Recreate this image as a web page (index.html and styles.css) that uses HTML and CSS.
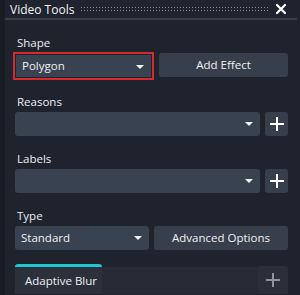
FILE: index.html
```html
<!DOCTYPE html>
<html lang="en">
<head>
    <meta charset="UTF-8">
    <title>Video Tools</title>
    <link rel="stylesheet" href="styles.css">
</head>
<body>
    <div class="panel">
        <div class="header">
            <span class="title">Video Tools</span>
            <span class="grip"></span>
            <svg class="close" width="12" height="12" viewBox="0 0 12 12">
                <path d="M2 2 L10 10 M10 2 L2 10" stroke="#fff" stroke-width="2.2" stroke-linecap="round"/>
            </svg>
        </div>

        <div class="content">
            <div class="label">Shape</div>
            <div class="row">
                <div class="highlight">
                    <div class="select">Polygon<span class="caret"></span></div>
                </div>
                <div class="btn wide">Add Effect</div>
            </div>

            <div class="label">Reasons</div>
            <div class="row">
                <div class="select grow"><span class="caret"></span></div>
                <div class="btn plus">
                    <svg width="14" height="14" viewBox="0 0 14 14"><path d="M7 0 V14 M0 7 H14" stroke="#fff" stroke-width="2"/></svg>
                </div>
            </div>

            <div class="label">Labels</div>
            <div class="row">
                <div class="select grow"><span class="caret"></span></div>
                <div class="btn plus">
                    <svg width="14" height="14" viewBox="0 0 14 14"><path d="M7 0 V14 M0 7 H14" stroke="#fff" stroke-width="2"/></svg>
                </div>
            </div>

            <div class="label">Type</div>
            <div class="row">
                <div class="select half">Standard<span class="caret"></span></div>
                <div class="btn wide">Advanced Options</div>
            </div>

            <div class="tabs">
                <div class="tab active">Adaptive Blur</div>
                <div class="tab-fill"></div>
                <div class="tab-add">
                    <svg width="14" height="14" viewBox="0 0 14 14"><path d="M7 0 V14 M0 7 H14" stroke="#8f95a0" stroke-width="2"/></svg>
                </div>
            </div>
        </div>
    </div>
</body>
</html>
```

FILE: styles.css
```css
* {
    padding: 0;
    margin: 0;
    box-sizing: border-box;
}

body {
    background: #1f232d;
    font-family: "Open Sans", "Liberation Sans", sans-serif;
    font-size: 11.5px;
    color: #e6e8ec;
}

.panel {
    width: 300px;
    height: 295px;
    border-left: 5px solid #181b22;
    overflow: hidden;
}

.header {
    display: flex;
    align-items: center;
    height: 20px;
    padding: 0 10px 0 5px;
    border-bottom: 2px solid #363c48;
    margin-right: 3px;
}

.title {
    font-size: 12px;
    color: #f2f3f5;
}

.grip {
    flex: 1;
    height: 6px;
    margin: 0 6px 0 6px;
    background-image: radial-gradient(circle, #8a909c 0.8px, transparent 1px);
    background-size: 3px 3px;
}

.close {
    display: block;
}

.content {
    padding: 15px 12px 0 10px;
}

.label {
    font-size: 11.5px;
    line-height: 15px;
    color: #eceef1;
    margin-left: 2px;
}

.row {
    display: flex;
    gap: 5px;
    margin: 3px 0 15px;
}

.select {
    position: relative;
    height: 24px;
    line-height: 24px;
    padding-left: 6px;
    background: #394250;
    border-radius: 3px;
    color: #f0f1f4;
}

.caret {
    position: absolute;
    right: 7px;
    top: 10px;
    border-left: 4px solid transparent;
    border-right: 4px solid transparent;
    border-top: 4px solid #f2f2f2;
}

.highlight {
    width: 141px;
    padding: 1px;
    margin: -1px 0 -1px -2px;
    border: 2px solid #d62a2c;
}

.highlight .select {
    border-radius: 0;
    height: 22px;
    line-height: 22px;
}

.grow {
    flex: 1;
}

.half {
    width: 134px;
}

.btn {
    height: 24px;
    line-height: 24px;
    text-align: center;
    background: #373f4c;
    border-radius: 3px;
    color: #eef0f3;
}

.wide {
    flex: 1;
}

.plus {
    width: 23px;
    display: flex;
    align-items: center;
    justify-content: center;
}

.tabs {
    display: flex;
    align-items: flex-end;
    margin-top: -1px;
}

.tab {
    width: 87px;
    height: 30px;
    line-height: 27px;
    padding-left: 10px;
    white-space: nowrap;
    background: #2b303b;
    border-top: 3px solid #1fc7d3;
    border-radius: 3px 3px 0 0;
    color: #eef0f3;
}

.tab-fill {
    flex: 1;
    height: 27px;
    background: #262b35;
}

.tab-add {
    width: 30px;
    height: 28px;
    display: flex;
    align-items: center;
    justify-content: center;
    background: #2a2f3a;
    border-radius: 3px 3px 0 0;
}
```
